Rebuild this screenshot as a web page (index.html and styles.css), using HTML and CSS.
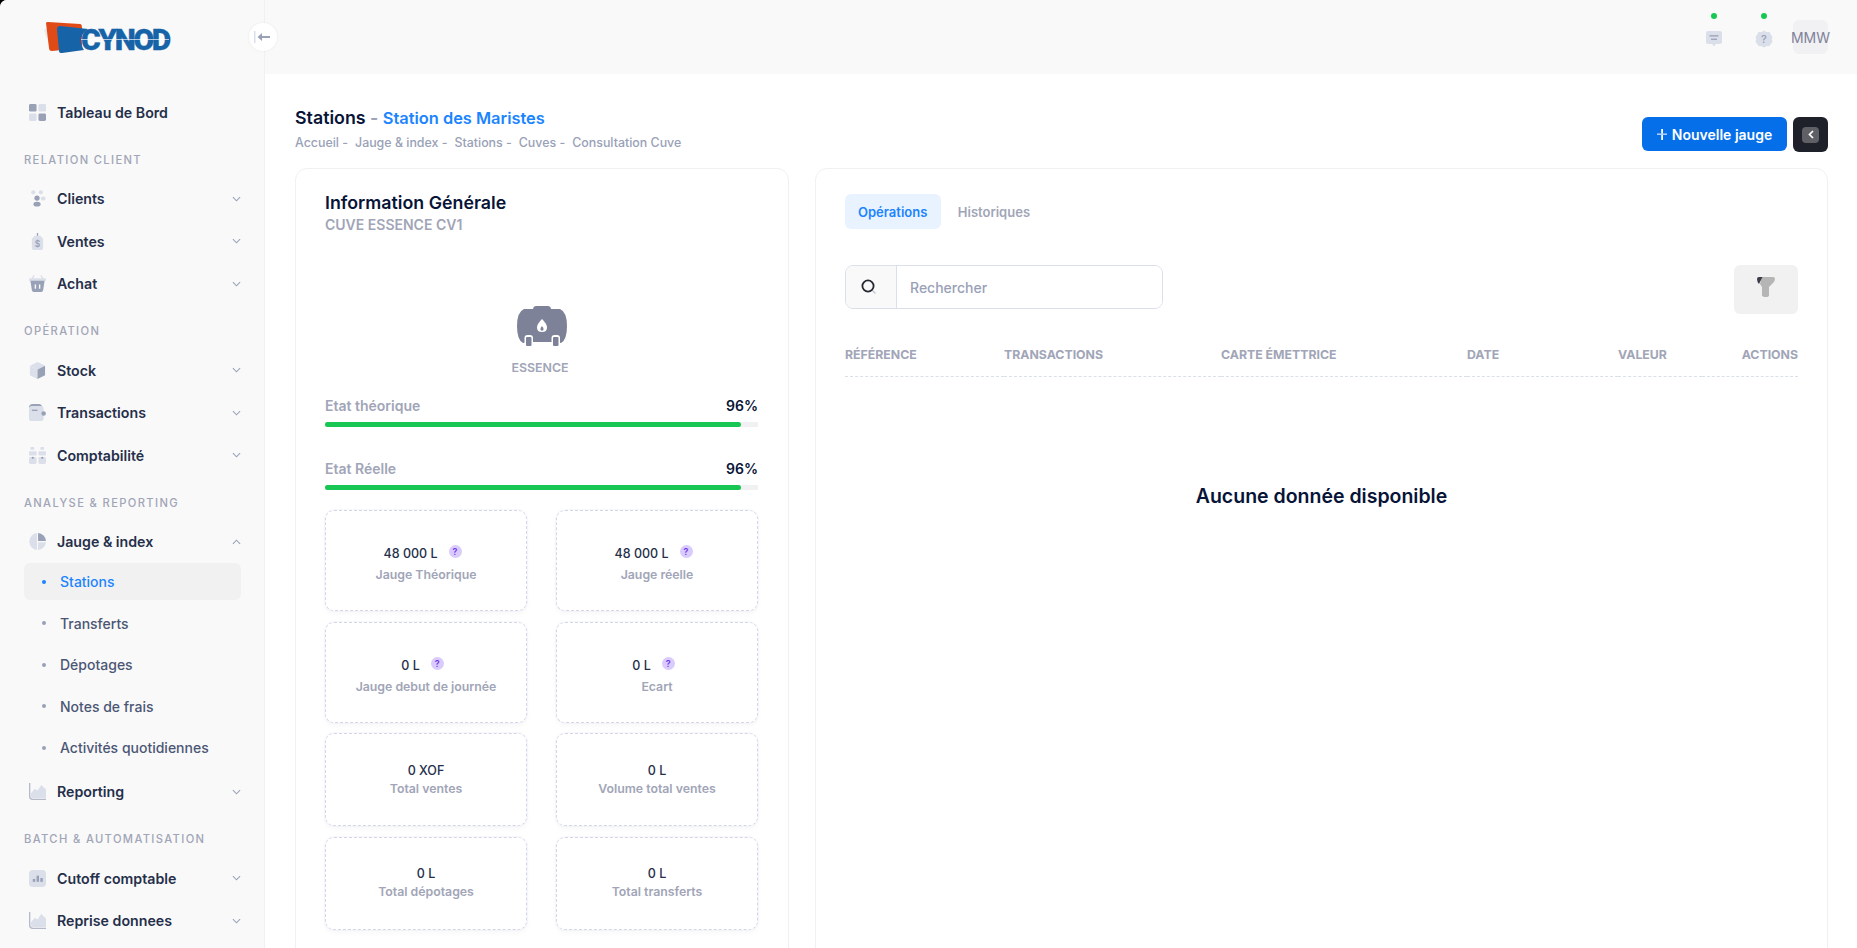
FILE: index.html
```html
<!DOCTYPE html>
<html lang="fr">
  <head>
    <meta charset="UTF-8" />
    <meta name="viewport" content="width=device-width, initial-scale=1.0" />
    <title>Consultation Cuve</title>
    <link rel="stylesheet" href="styles.css">
  </head>
  <body>
    <div class="app">
      <aside class="sidebar">
        <div class="logo">
          <svg width="44" height="36" viewBox="0 0 44 36">
            <path d="M0 10 L3 8 L6 27 Z" fill="#e8e8e8" />
            <path d="M2 3 Q2 2 4 2 L36 4 Q38 4 38 8 L38 28 L8 31 Q5 31 5 28 Z" fill="#e04a17" />
            <path d="M13 9 Q13 6 16 6 L44 9 Q38 13 37 19 Q37 26 40 30 L18 33 Q15 33 15 31 Z" fill="#1763a8" />
          </svg>
          <span class="logo-text">CYNOD</span>
        </div>
        <button class="sidebar-toggle">
          <svg width="16" height="14" viewBox="0 0 16 14">
            <rect x="0" y="1" width="1.5" height="12" fill="#dbdfe9" />
            <path d="M16 6 H8 V3 L3.6 7 L8 11 V8 H16 Z" fill="#99a1b7" />
          </svg>
        </button>
        <nav class="menu">
          <a class="menu-item">
            <svg class="menu-icon" viewBox="0 0 18 18">
              <rect x="0" y="0" width="8" height="8" rx="1.5" fill="#99a1b7" />
              <rect x="10" y="0" width="8" height="8" rx="1.5" fill="#dbdfe9" />
              <rect x="0" y="10" width="8" height="8" rx="1.5" fill="#dbdfe9" />
              <rect x="10" y="10" width="8" height="8" rx="1.5" fill="#99a1b7" />
            </svg>
            <span class="menu-label">Tableau de Bord</span>
          </a>

          <div class="menu-section">Relation client</div>
          <a class="menu-item">
            <svg class="menu-icon" viewBox="0 0 18 18">
              <circle cx="4.5" cy="2.5" r="2.2" fill="#dbdfe9" />
              <circle cx="12.5" cy="2.5" r="2.2" fill="#dbdfe9" />
              <ellipse cx="15" cy="9" rx="2.6" ry="2" fill="#dbdfe9" />
              <circle cx="8.5" cy="8.6" r="2.8" fill="#99a1b7" />
              <ellipse cx="8.5" cy="15" rx="3.8" ry="2.6" fill="#99a1b7" />
            </svg>
            <span class="menu-label">Clients</span>
            <svg class="chevron" viewBox="0 0 10 6"><path d="M1 1 L5 5 L9 1" /></svg>
          </a>
          <a class="menu-item">
            <svg class="menu-icon" viewBox="0 0 18 18">
              <rect x="8.3" y="0" width="1.4" height="4" fill="#99a1b7" />
              <path d="M6 3 H12 L15 6 V16 Q15 18 13 18 H5 Q3 18 3 16 V6 Z" fill="#dbdfe9" />
              <text x="9" y="15" class="tag-sign">$</text>
            </svg>
            <span class="menu-label">Ventes</span>
            <svg class="chevron" viewBox="0 0 10 6"><path d="M1 1 L5 5 L9 1" /></svg>
          </a>
          <a class="menu-item">
            <svg class="menu-icon" viewBox="0 0 18 18">
              <path d="M3 4 L5.5 0.5 M15 4 L12.5 0.5" stroke="#dbdfe9" stroke-width="1.4" fill="none" />
              <rect x="0" y="3.5" width="18" height="3" rx="1.2" fill="#dbdfe9" />
              <path d="M1.5 6 H16.5 L15 16 Q14.7 18 13 18 H5 Q3.3 18 3 16 Z" fill="#99a1b7" />
              <rect x="6" y="10" width="1.5" height="4.5" fill="#f9f9f9" />
              <rect x="10.5" y="10" width="1.5" height="4.5" fill="#f9f9f9" />
            </svg>
            <span class="menu-label">Achat</span>
            <svg class="chevron" viewBox="0 0 10 6"><path d="M1 1 L5 5 L9 1" /></svg>
          </a>

          <div class="menu-section">Opération</div>
          <a class="menu-item">
            <svg class="menu-icon" viewBox="0 0 18 18">
              <path d="M9 0 L17 4 L9 8 L1 4 Z" fill="#dbdfe9" />
              <path d="M1 4 L9 8 V18 L1 14 Z" fill="#dbdfe9" />
              <path d="M17 4 V14 L9 18 V8 Z" fill="#99a1b7" />
            </svg>
            <span class="menu-label">Stock</span>
            <svg class="chevron" viewBox="0 0 10 6"><path d="M1 1 L5 5 L9 1" /></svg>
          </a>
          <a class="menu-item">
            <svg class="menu-icon" viewBox="0 0 18 18">
              <path d="M0 4 Q0 0 4 0 H10 Q14 0 14 4 Z" fill="#99a1b7" />
              <rect x="0" y="2" width="15.5" height="16" rx="3" fill="#dbdfe9" />
              <rect x="3" y="6" width="6" height="1.4" fill="#99a1b7" />
              <circle cx="15.5" cy="10" r="2.4" fill="#99a1b7" />
            </svg>
            <span class="menu-label">Transactions</span>
            <svg class="chevron" viewBox="0 0 10 6"><path d="M1 1 L5 5 L9 1" /></svg>
          </a>
          <a class="menu-item">
            <svg class="menu-icon" viewBox="0 0 18 18">
              <rect x="1.5" y="0" width="4" height="3" rx="1" fill="#dbdfe9" />
              <rect x="12" y="0" width="4" height="3" rx="1" fill="#dbdfe9" />
              <rect x="0" y="4.5" width="8" height="4.5" rx="1" fill="#dbdfe9" />
              <rect x="10" y="4.5" width="8" height="4.5" rx="1" fill="#dbdfe9" />
              <rect x="0" y="10.5" width="8" height="7.5" rx="1.5" fill="#dbdfe9" />
              <rect x="10" y="10.5" width="8" height="7.5" rx="1.5" fill="#dbdfe9" />
              <circle cx="4" cy="11.5" r="1.2" fill="#99a1b7" />
              <circle cx="14" cy="11.5" r="1.2" fill="#99a1b7" />
            </svg>
            <span class="menu-label">Comptabilité</span>
            <svg class="chevron" viewBox="0 0 10 6"><path d="M1 1 L5 5 L9 1" /></svg>
          </a>

          <div class="menu-section">Analyse &amp; Reporting</div>
          <a class="menu-item open">
            <svg class="menu-icon" viewBox="0 0 18 18">
              <path d="M8.4 0.1 V18 A9 9 0 0 1 8.4 0.1 Z" fill="#dbdfe9" />
              <path d="M9.6 9.8 H18 A9 9 0 0 1 9.6 18 Z" fill="#dbdfe9" />
              <path d="M9.6 0 A9 9 0 0 1 18 8.4 H9.6 Z" fill="#99a1b7" />
            </svg>
            <span class="menu-label">Jauge &amp; index</span>
            <svg class="chevron" viewBox="0 0 10 6"><path d="M1 5 L5 1 L9 5" /></svg>
          </a>
          <div class="submenu">
            <a class="menu-sub active"><span class="sub-pill"><i class="sub-dot"></i>Stations</span></a>
            <a class="menu-sub"><span class="sub-pill"><i class="sub-dot"></i>Transferts</span></a>
            <a class="menu-sub"><span class="sub-pill"><i class="sub-dot"></i>Dépotages</span></a>
            <a class="menu-sub"><span class="sub-pill"><i class="sub-dot"></i>Notes de frais</span></a>
            <a class="menu-sub"><span class="sub-pill"><i class="sub-dot"></i>Activités quotidiennes</span></a>
          </div>
          <a class="menu-item">
            <svg class="menu-icon" viewBox="0 0 18 18">
              <path d="M2 14 L2 11 L6 6 L9 8 L13 2 L18 7 V16 H4 Q2 16 2 14 Z" fill="#dbdfe9" />
              <path d="M0.7 0 V14 Q0.7 17.3 4 17.3 H18" stroke="#b5b9ca" stroke-width="1.4" fill="none" />
            </svg>
            <span class="menu-label">Reporting</span>
            <svg class="chevron" viewBox="0 0 10 6"><path d="M1 1 L5 5 L9 1" /></svg>
          </a>

          <div class="menu-section">Batch &amp; Automatisation</div>
          <a class="menu-item">
            <svg class="menu-icon" viewBox="0 0 18 18">
              <rect x="0" y="0" width="18" height="18" rx="4" fill="#dbdfe9" />
              <rect x="4" y="9.5" width="2.6" height="3" fill="#99a1b7" />
              <rect x="8" y="6" width="2.6" height="6.5" fill="#99a1b7" />
              <rect x="12" y="8.5" width="2.6" height="4" fill="#99a1b7" />
            </svg>
            <span class="menu-label">Cutoff comptable</span>
            <svg class="chevron" viewBox="0 0 10 6"><path d="M1 1 L5 5 L9 1" /></svg>
          </a>
          <a class="menu-item">
            <svg class="menu-icon" viewBox="0 0 18 18">
              <path d="M2 14 L2 11 L6 6 L9 8 L13 2 L18 7 V16 H4 Q2 16 2 14 Z" fill="#dbdfe9" />
              <path d="M0.7 0 V14 Q0.7 17.3 4 17.3 H18" stroke="#b5b9ca" stroke-width="1.4" fill="none" />
            </svg>
            <span class="menu-label">Reprise donnees</span>
            <svg class="chevron" viewBox="0 0 10 6"><path d="M1 1 L5 5 L9 1" /></svg>
          </a>
        </nav>
      </aside>

      <div class="main">
        <header class="topbar">
          <div class="top-icon">
            <i class="top-dot"></i>
            <svg width="18" height="18" viewBox="0 0 18 18">
              <path d="M3 1 H15 Q17 1 17 3 V12 Q17 14 15 14 H11 L9 16.5 L7 14 H3 Q1 14 1 12 V3 Q1 1 3 1 Z" fill="#dbdfe9" />
              <rect x="4.5" y="5.2" width="9" height="1.3" fill="#99a1b7" />
              <rect x="6" y="8.6" width="6" height="1.3" fill="#99a1b7" />
            </svg>
          </div>
          <div class="top-icon">
            <i class="top-dot"></i>
            <svg width="18" height="18" viewBox="0 0 18 18">
              <path d="M9 0.5 L11.5 2 L14.5 2 L15.8 4.6 L17.5 7 L16.8 9.5 L17.5 12 L15.8 14 L14.5 16 L11.5 16.2 L9 17.5 L6.5 16.2 L3.5 16 L2.2 14 L0.5 12 L1.2 9.5 L0.5 7 L2.2 4.6 L3.5 2 L6.5 2 Z" fill="#dbdfe9" />
              <text x="9" y="13.2" class="top-help">?</text>
            </svg>
          </div>
          <div class="avatar">MMW</div>
        </header>

        <div class="content">
          <div class="toolbar">
            <div class="page-title">
              <h1><span>Stations</span> <em>-</em> <b>Station des Maristes</b></h1>
              <ul class="breadcrumb">
                <li>Accueil -</li>
                <li>Jauge &amp; index -</li>
                <li>Stations -</li>
                <li>Cuves -</li>
                <li>Consultation Cuve</li>
              </ul>
            </div>
            <div class="toolbar-actions">
              <button class="btn-primary">
                <svg width="10" height="11" viewBox="0 0 10 11">
                  <rect x="4.2" y="0" width="1.8" height="11" fill="#fff" />
                  <rect x="0" y="4.4" width="10" height="1.6" fill="#a9cdf8" />
                </svg>
                Nouvelle jauge
              </button>
              <button class="btn-dark">
                <span class="btn-dark-inner">
                  <svg width="6" height="9" viewBox="0 0 6 9"><path d="M5 1 L1.5 4.5 L5 8" /></svg>
                </span>
              </button>
            </div>
          </div>

          <div class="cards">
            <section class="card card-info">
              <h2>Information Générale</h2>
              <div class="card-sub">CUVE ESSENCE CV1</div>

              <div class="tank">
                <svg width="50" height="40" viewBox="0 0 50 40">
                  <path d="M16 3 Q16.5 0 19 0 H31 Q33.5 0 34 3 Z" fill="#7e8299" />
                  <path d="M7 3 H43 Q50 6 50 20 Q50 34 44 37 L37 36 H13 L6 37 Q0 34 0 20 Q0 6 7 3 Z" fill="#7e8299" />
                  <rect x="7.5" y="29" width="8.5" height="11" rx="3" fill="#fff" />
                  <rect x="34.5" y="29" width="8.5" height="11" rx="3" fill="#fff" />
                  <rect x="9" y="31" width="5.5" height="9" rx="1" fill="#7e8299" />
                  <rect x="36" y="31" width="5.5" height="9" rx="1" fill="#7e8299" />
                  <path d="M25 13 Q30 18 30 21.5 Q30 26 25 26 Q20 26 20 21.5 Q20 18 25 13 Z" fill="#fff" />
                  <path d="M25 20 Q27 22 26.5 24 Q25 25.5 23.5 24 Q23 22 25 20 Z" fill="#7e8299" />
                </svg>
                <span>ESSENCE</span>
              </div>

              <div class="gauge">
                <div class="gauge-head"><span>Etat théorique</span><strong>96%</strong></div>
                <div class="gauge-track"><div class="gauge-fill" style="width: 96%"></div></div>
              </div>
              <div class="gauge">
                <div class="gauge-head"><span>Etat Réelle</span><strong>96%</strong></div>
                <div class="gauge-track"><div class="gauge-fill" style="width: 96%"></div></div>
              </div>

              <div class="stats">
                <div class="stat stat-tall">
                  <div class="stat-value">48 000 L<i class="hint">?</i></div>
                  <div class="stat-label">Jauge Théorique</div>
                </div>
                <div class="stat stat-tall">
                  <div class="stat-value">48 000 L<i class="hint">?</i></div>
                  <div class="stat-label">Jauge réelle</div>
                </div>
                <div class="stat stat-tall">
                  <div class="stat-value">0 L<i class="hint">?</i></div>
                  <div class="stat-label">Jauge debut de journée</div>
                </div>
                <div class="stat stat-tall">
                  <div class="stat-value">0 L<i class="hint">?</i></div>
                  <div class="stat-label">Ecart</div>
                </div>
                <div class="stat">
                  <div class="stat-value">0 XOF</div>
                  <div class="stat-label">Total ventes</div>
                </div>
                <div class="stat">
                  <div class="stat-value">0 L</div>
                  <div class="stat-label">Volume total ventes</div>
                </div>
                <div class="stat">
                  <div class="stat-value">0 L</div>
                  <div class="stat-label">Total dépotages</div>
                </div>
                <div class="stat">
                  <div class="stat-value">0 L</div>
                  <div class="stat-label">Total transferts</div>
                </div>
              </div>
            </section>

            <section class="card card-ops">
              <div class="tabs">
                <a class="tab active">Opérations</a>
                <a class="tab">Historiques</a>
              </div>

              <div class="filters">
                <div class="search">
                  <span class="search-addon">
                    <svg width="18" height="18" viewBox="0 0 18 18">
                      <path d="M12.5 12.5 L15.5 15.5" stroke="#c4c8d4" stroke-width="1.5" />
                      <circle cx="8" cy="8" r="5.6" fill="none" stroke="#252830" stroke-width="1.8" />
                    </svg>
                  </span>
                  <input type="text" placeholder="Rechercher" />
                </div>
                <button class="btn-filter">
                  <svg width="18" height="20" viewBox="0 0 18 20">
                    <path d="M5 0 H16 Q18 0 18 2 Q18 4 16 6 L12 10 V18 Q12 20 9 20 Q5 20 5 18 V10 L3 7 Z" fill="#b5b5b5" />
                    <path d="M0 2 Q0 0 2 0 H5.5 L2 7 Q0 5 0 2 Z" fill="#3a3d46" />
                  </svg>
                </button>
              </div>

              <table class="ops-table">
                <thead>
                  <tr>
                    <th class="col-ref">Référence</th>
                    <th class="col-trans">Transactions</th>
                    <th class="col-card">Carte émettrice</th>
                    <th class="col-date">Date</th>
                    <th class="col-value">Valeur</th>
                    <th class="col-actions">Actions</th>
                  </tr>
                </thead>
              </table>
              <div class="empty">Aucune donnée disponible</div>
            </section>
          </div>
        </div>
      </div>
    </div>
  </body>
</html>
```

FILE: styles.css
```css
* {
  box-sizing: border-box;
}
html {
  background: #000;
}
body {
  margin: 0;
  height: 100vh;
  overflow: hidden;
  font-family: Inter, "Liberation Sans", sans-serif;
  color: #071437;
}
.app {
  display: flex;
  height: 100vh;
  background: #fff;
  border-top-left-radius: 7px;
  overflow: hidden;
}

/* sidebar */
.sidebar {
  position: relative;
  width: 265px;
  flex-shrink: 0;
  background: #f9f9f9;
  border-right: 1px solid #f1f1f4;
  padding: 0 23px 0 24px;
}
.logo {
  height: 91px;
  padding: 20px 0 0 20px;
  display: flex;
  align-items: flex-start;
}
.logo svg {
  display: block;
  flex-shrink: 0;
}
.logo-text {
  position: relative;
  margin: 2px 0 0 -7px;
  font-family: Roboto, sans-serif;
  font-weight: 900;
  font-size: 30px;
  line-height: 36px;
  letter-spacing: -2.4px;
  color: #1763a8;
  -webkit-text-stroke: 0.3px #1763a8;
}
.logo-text::after {
  content: "";
  position: absolute;
  left: 0;
  right: 0;
  top: 17px;
  height: 1px;
  background: rgba(255, 255, 255, 0.65);
}
.sidebar-toggle {
  position: absolute;
  top: 23px;
  left: 249px;
  width: 28px;
  height: 28px;
  padding: 0 2px 0 0;
  border: 0;
  border-radius: 50%;
  background: #fff;
  box-shadow: 0 0 3px rgba(0, 0, 0, 0.07);
  display: flex;
  align-items: center;
  justify-content: center;
  z-index: 2;
}
.menu-item {
  height: 42.5px;
  display: flex;
  align-items: center;
  padding-left: 5px;
  font-size: 14.2px;
  font-weight: 600;
  color: #252f4a;
}
.menu-item.open {
  margin-bottom: -2px;
}
.menu-icon {
  width: 17px;
  height: 17px;
  margin-right: 11px;
  flex-shrink: 0;
}
.menu-label {
  flex: 1;
}
.chevron {
  width: 9px;
  height: 6px;
  fill: none;
  stroke: #99a1b7;
  stroke-width: 1.2;
}
.tag-sign {
  font-family: Inter, sans-serif;
  font-size: 9px;
  text-anchor: middle;
  fill: #99a1b7;
}
.menu-section {
  margin: 18px 0 10px;
  line-height: 16px;
  font-size: 11.2px;
  font-weight: 500;
  letter-spacing: 1.35px;
  text-transform: uppercase;
  color: #a1a5b7;
}
.submenu {
  padding-bottom: 2px;
}
.menu-sub {
  height: 41.5px;
  display: flex;
  align-items: center;
  font-size: 14px;
  font-weight: 500;
  color: #4b5675;
}
.sub-pill {
  width: 100%;
  height: 37px;
  display: flex;
  align-items: center;
  padding-left: 18px;
  border-radius: 6px;
}
.sub-dot {
  width: 4px;
  height: 4px;
  margin-right: 14px;
  border-radius: 50%;
  background: #99a1b7;
}
.menu-sub.active .sub-pill {
  background: #f1f1f2;
  color: #1b84ff;
}
.menu-sub.active .sub-dot {
  background: #1b84ff;
}

/* top bar */
.main {
  flex: 1;
  min-width: 0;
  display: flex;
  flex-direction: column;
}
.topbar {
  height: 74px;
  flex-shrink: 0;
  background: #f9f9f9;
  display: flex;
  align-items: center;
  justify-content: flex-end;
  padding-right: 29px;
}
.top-icon {
  position: relative;
  width: 18px;
  height: 18px;
  margin-right: 32px;
  margin-top: 3px;
}
.top-icon:nth-child(2) {
  margin-right: 20px;
}
.top-dot {
  position: absolute;
  left: 6px;
  top: -17px;
  width: 6px;
  height: 6px;
  border-radius: 50%;
  background: #17c653;
}
.top-help {
  font-family: Inter, sans-serif;
  font-size: 11px;
  font-weight: 500;
  text-anchor: middle;
  fill: #99a1b7;
}
.avatar {
  width: 35px;
  height: 34px;
  border-radius: 6px;
  background: #f1f1f4;
  display: flex;
  align-items: center;
  justify-content: center;
  font-size: 14px;
  color: #7e8299;
}

/* page */
.content {
  flex: 1;
  min-height: 0;
  padding: 0 29px 0 30px;
}
.toolbar {
  height: 94px;
  display: flex;
  justify-content: space-between;
  align-items: flex-start;
  padding-top: 33px;
}
.page-title h1 {
  margin: 0;
  font-size: 17.8px;
  line-height: 22px;
  font-weight: 600;
}
.page-title em {
  font-style: normal;
  color: #99a1b7;
}
.page-title b {
  font-weight: 600;
  font-size: 16.4px;
  color: #1b84ff;
}
.breadcrumb {
  list-style: none;
  margin: 5px 0 0;
  padding: 0;
  display: flex;
  gap: 7px;
  font-size: 12.4px;
  line-height: 18px;
  font-weight: 500;
  color: #99a1b7;
}
.toolbar-actions {
  display: flex;
  align-items: flex-start;
  gap: 6px;
  margin-top: 10px;
}
.btn-primary {
  width: 145px;
  height: 34px;
  border: 0;
  border-radius: 6px;
  background: #056ee9;
  color: #fff;
  font-family: inherit;
  font-size: 14px;
  font-weight: 600;
  display: flex;
  align-items: center;
  justify-content: center;
  gap: 5px;
}
.btn-dark {
  width: 35px;
  height: 35px;
  padding: 0;
  border: 0;
  border-radius: 6px;
  background: #1e2129;
  display: flex;
  align-items: center;
  justify-content: center;
}
.btn-dark-inner {
  width: 17px;
  height: 16px;
  border-radius: 4px;
  background: #5e6066;
  display: flex;
  align-items: center;
  justify-content: center;
}
.btn-dark-inner path {
  fill: none;
  stroke: #fff;
  stroke-width: 1.7;
}

.cards {
  display: flex;
  gap: 26px;
  align-items: flex-start;
}
.card {
  min-height: 830px;
  background: #fff;
  border: 1px solid #f1f1f4;
  border-radius: 12px;
  box-shadow: 0 3px 4px rgba(0, 0, 0, 0.01);
}

/* left card */
.card-info {
  width: 494px;
  flex-shrink: 0;
  padding: 23px 30px 0 29px;
}
.card-info h2 {
  margin: 0;
  font-size: 17.8px;
  line-height: 22px;
  font-weight: 600;
}
.card-sub {
  margin-top: 2px;
  font-size: 14px;
  line-height: 18px;
  font-weight: 600;
  color: #a1a5b7;
}
.tank {
  margin-top: 72px;
  display: flex;
  flex-direction: column;
  align-items: center;
  gap: 14px;
}
.tank span {
  margin-right: 3px;
  font-size: 12.4px;
  line-height: 16px;
  font-weight: 600;
  color: #a1a5b7;
}
.gauge {
  margin-top: 20px;
}
.gauge + .gauge {
  margin-top: 32px;
}
.gauge-head {
  display: flex;
  justify-content: space-between;
  font-size: 14px;
  line-height: 20px;
  font-weight: 600;
  color: #a1a5b7;
}
.gauge-head strong {
  font-weight: 600;
  color: #071437;
}
.gauge-track {
  height: 5px;
  margin-top: 6px;
  background: #f1f1f4;
}
.gauge-fill {
  height: 100%;
  border-radius: 3px;
  background: #17c653;
}
.stats {
  margin-top: 20px;
  display: grid;
  grid-template-columns: 202px 202px;
  column-gap: 29px;
  row-gap: 10.5px;
}
.stat {
  height: 93px;
  padding-top: 4px;
  padding-bottom: 4px;
  border: 1px dashed #d3d6ea;
  border-radius: 9px;
  box-shadow: 0 0 0 1px rgba(232, 234, 245, 0.35), 0 3px 5px rgba(0, 0, 0, 0.03);
  display: flex;
  flex-direction: column;
  align-items: center;
  justify-content: center;
  text-align: center;
}
.stat-tall {
  height: 101px;
  gap: 3px;
  padding-top: 8px;
  padding-bottom: 0;
}
.stat-value {
  font-size: 12.5px;
  line-height: 18px;
  font-weight: 500;
  color: #252f4a;
}
.stat-label {
  font-size: 12.3px;
  line-height: 18px;
  font-weight: 600;
  color: #a1a5b7;
}
.hint {
  display: inline-block;
  width: 13px;
  height: 13px;
  margin: 0 7px 0 11px;
  border-radius: 50%;
  background: #d9cbfb;
  color: #7239ea;
  font-size: 9px;
  line-height: 13px;
  font-style: normal;
  font-weight: 600;
  vertical-align: 3px;
}

/* right card */
.card-ops {
  flex: 1;
  min-width: 0;
  padding: 25px 29px 0;
}
.tabs {
  display: flex;
  gap: 3.5px;
}
.tab {
  height: 35px;
  padding: 0 13px;
  border-radius: 6px;
  display: flex;
  align-items: center;
  font-size: 13px;
  font-weight: 600;
  color: #a1a5b7;
}
.tab.active {
  padding-right: 14px;
  background: #e9f3ff;
  color: #1b84ff;
}
.filters {
  margin-top: 36px;
  display: flex;
  justify-content: space-between;
  align-items: flex-start;
}
.search {
  width: 318px;
  height: 44px;
  display: flex;
  border: 1px solid #dbdfe9;
  border-radius: 8px;
  overflow: hidden;
}
.search-addon {
  width: 51px;
  background: #f9f9f9;
  border-right: 1px solid #dbdfe9;
  display: flex;
  align-items: center;
  justify-content: center;
  padding-right: 4px;
}
.search input {
  flex: 1;
  min-width: 0;
  border: 0;
  outline: 0;
  padding: 0 13px;
  font-family: inherit;
  font-size: 14px;
  font-weight: 500;
  background: #fff;
}
.search input::placeholder {
  color: #99a1b7;
  opacity: 1;
}
.btn-filter {
  width: 64px;
  height: 49px;
  padding: 0 0 5px 0;
  border: 0;
  border-radius: 6px;
  background: #f1f1f2;
  display: flex;
  align-items: center;
  justify-content: center;
}
.ops-table {
  width: 100%;
  margin-top: 21px;
  border-collapse: collapse;
  table-layout: fixed;
}
.ops-table th {
  height: 41px;
  padding: 0 0 2px;
  border-bottom: 1px dashed #dbdfe9;
  text-align: left;
  font-size: 12.3px;
  font-weight: 700;
  text-transform: uppercase;
  color: #a1a5b7;
}
.col-ref { width: 159px; }
.col-trans { width: 217px; }
.col-card { width: 246px; }
.col-date { width: 151px; }
.col-value { width: 84px; }
.ops-table th.col-actions {
  text-align: right;
}
.empty {
  margin-top: 106px;
  text-align: center;
  font-size: 19.5px;
  line-height: 26px;
  font-weight: 600;
}
```
